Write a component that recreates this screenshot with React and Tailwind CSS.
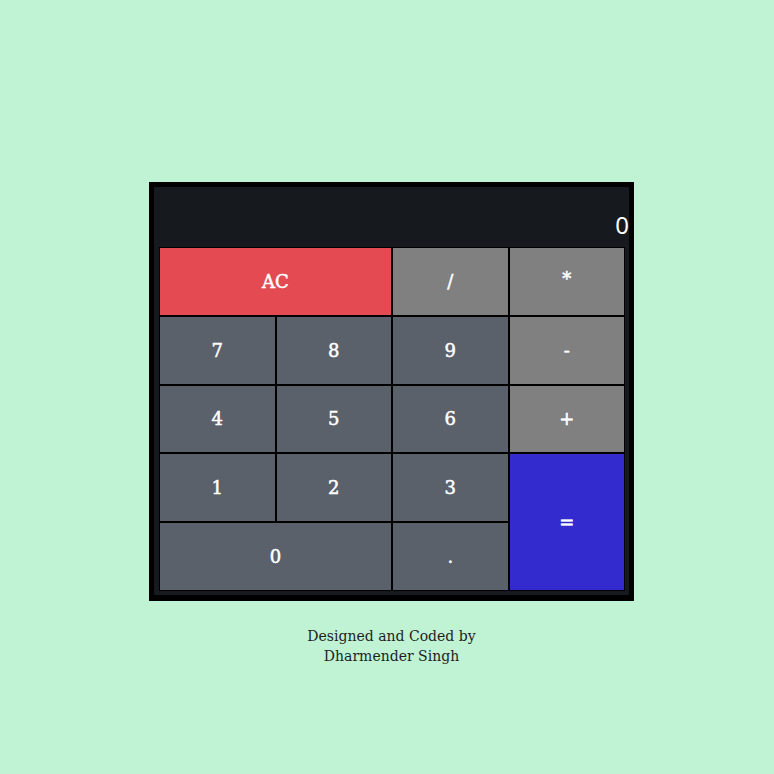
import React from "react";

const serif = { fontFamily: '"DejaVu Serif", serif' };

function Btn({ label, className = "" }) {
  return (
    <div
      className={`flex items-center justify-center border border-black text-white text-[18px] [-webkit-text-stroke:0.5px_white] ${className}`}
    >
      {label}
    </div>
  );
}

export default function App() {
  const num = "bg-[#5a616b]";
  const op = "bg-[#808080]";
  return (
    <div className="min-h-screen w-full bg-[#c0f2d4] pt-[182px]" style={serif}>
      <div className="ml-[149px] w-[485px]">
        <div className="border-black border-t-[5px] border-l-[5px] border-r-[5px] border-b-[6px] bg-[#16191e]">
          <div
            className="h-[60px] flex items-end justify-end pb-[6px] text-white text-[24px] leading-[33px]"
            style={{ fontFamily: '"Noto Sans", sans-serif' }}
          >
            0
          </div>
          <div className="pl-[5px] pr-[4px] pb-[4px]">
            <div className="grid grid-cols-4 grid-rows-5 w-[466px] h-[344px]">
              <Btn label="AC" className="col-span-2 bg-[#e34a51]" />
              <Btn label="/" className={op} />
              <Btn label="*" className={`${op} text-[12px] pb-[6px]`} />
              <Btn label="7" className={num} />
              <Btn label="8" className={num} />
              <Btn label="9" className={num} />
              <Btn label="-" className={`${op} text-[14px]`} />
              <Btn label="4" className={num} />
              <Btn label="5" className={num} />
              <Btn label="6" className={num} />
              <Btn label="+" className={`${op} text-[16px]`} />
              <Btn label="1" className={num} />
              <Btn label="2" className={num} />
              <Btn label="3" className={num} />
              <Btn label="=" className="row-span-2 bg-[#342bce] text-[16px]" />
              <Btn label="0" className={`col-span-2 ${num}`} />
              <Btn label="." className={num} />
            </div>
          </div>
        </div>
        <div className="mt-[25px] text-center text-[14px] leading-[20px] text-[#1e1e1e]">
          <div>Designed and Coded by</div>
          <div>Dharmender Singh</div>
        </div>
      </div>
    </div>
  );
}
